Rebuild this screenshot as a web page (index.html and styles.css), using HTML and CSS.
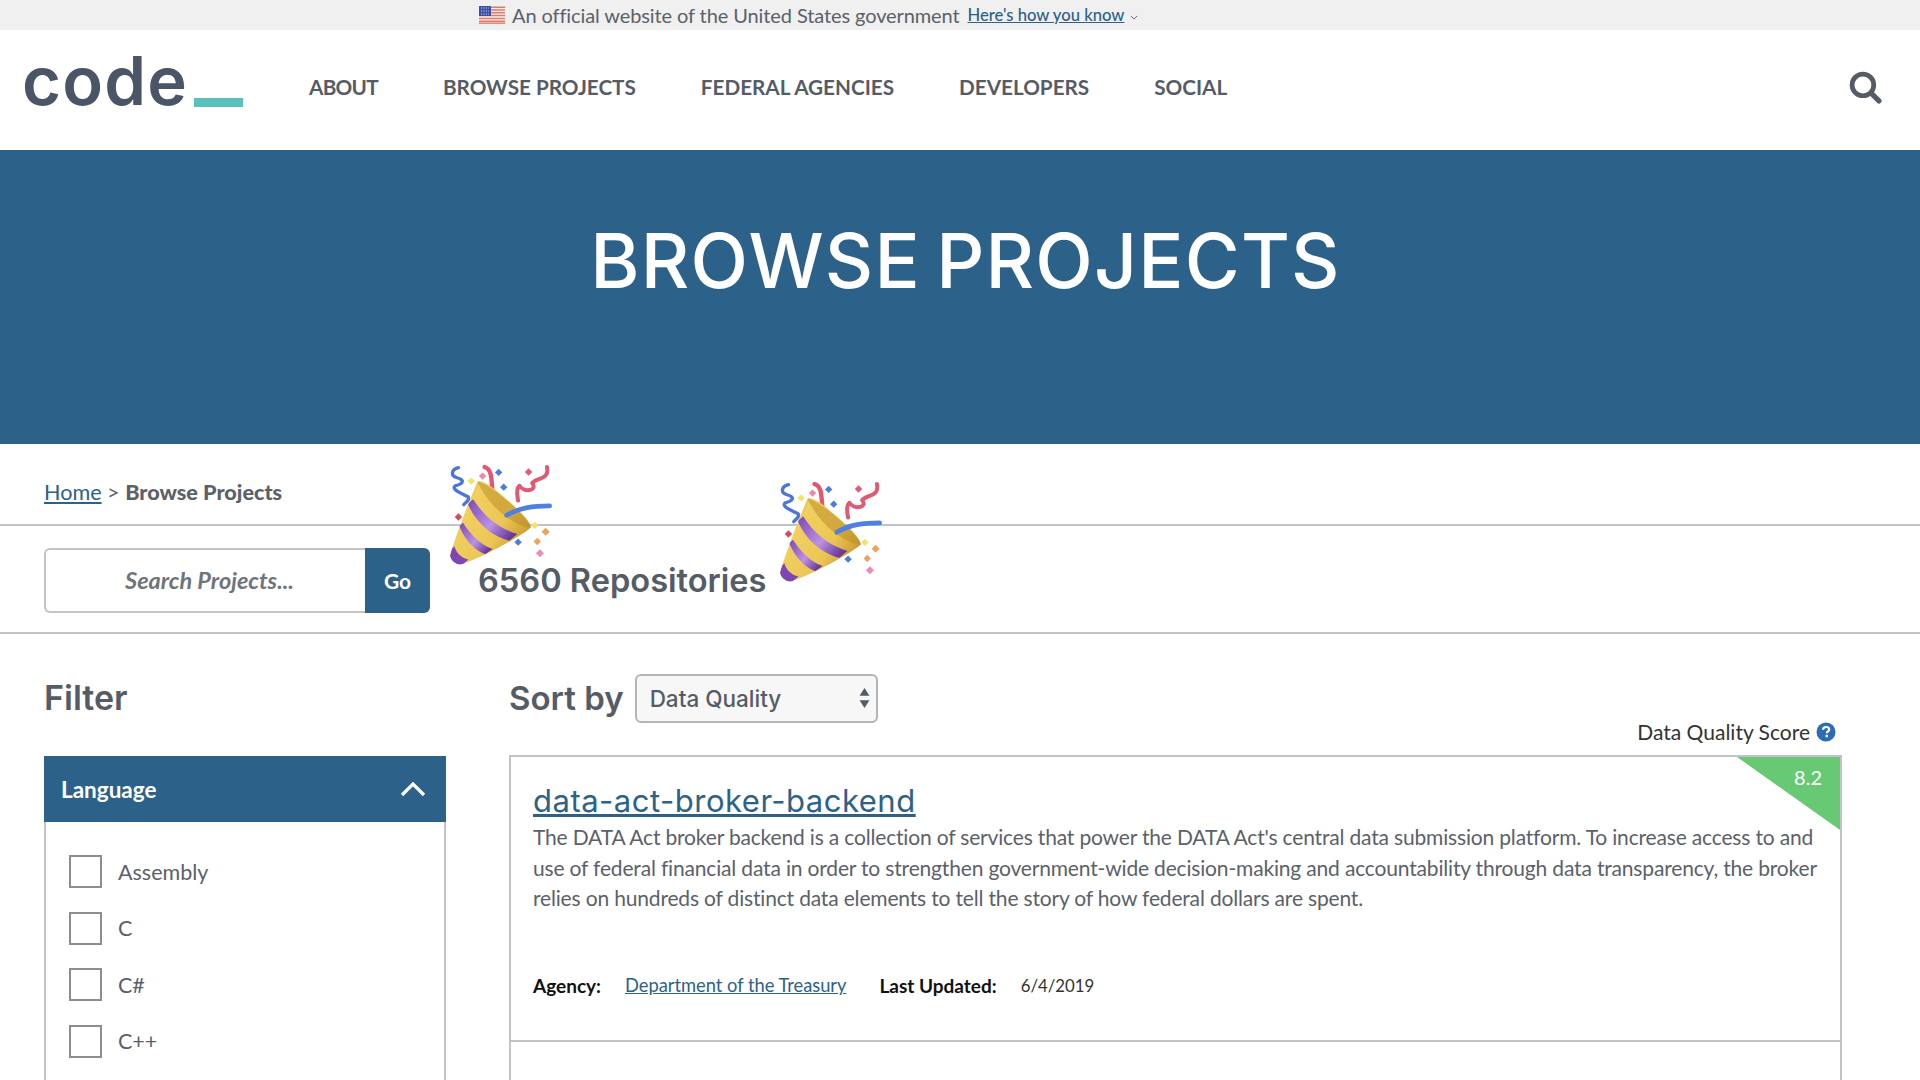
FILE: index.html
```html
<!DOCTYPE html>
<html lang="en">
<head>
<meta charset="utf-8">
<title>Browse Projects</title>
<link rel="stylesheet" href="styles.css">
</head>
<body>
<svg class="defs" width="0" height="0" aria-hidden="true">
  <defs>
    <linearGradient id="gold" x1="0" y1="0" x2="1" y2="0.6">
      <stop offset="0" stop-color="#c2962f"/>
      <stop offset="0.3" stop-color="#f0d060"/>
      <stop offset="0.7" stop-color="#ecc655"/>
      <stop offset="1" stop-color="#c8982f"/>
    </linearGradient>
    <linearGradient id="purple" x1="0" y1="0" x2="1" y2="0.7">
      <stop offset="0" stop-color="#7d45b5"/>
      <stop offset="0.6" stop-color="#bb92e6"/>
      <stop offset="1" stop-color="#6a3a9c"/>
    </linearGradient>
    <clipPath id="conecut">
      <path d="M113 95C128 92 150 104 190 140C235 178 272 215 272 232C240 260 130 320 66 342C50 345 34 332 31 316C50 250 90 150 113 95Z"/>
    </clipPath>
    <symbol id="popper" viewBox="25 40 310 310">
      <path d="M56 54C34 60 32 78 52 84C80 92 66 104 46 108C36 118 58 128 84 140C92 148 78 158 72 164" fill="none" stroke="#4a76dc" stroke-width="10" stroke-linecap="round" stroke-linejoin="round"/>
      <path d="M134 52C162 58 152 110 162 160" fill="none" stroke="#e5566e" stroke-width="13" stroke-linecap="round"/>
      <path d="M320 52C328 92 288 82 276 100C294 124 250 128 238 108C226 118 232 140 234 152" fill="none" stroke="#df5a72" stroke-width="12" stroke-linejoin="round" stroke-linecap="round"/>
      <path d="M113 95C128 92 150 104 190 140C235 178 272 215 272 232C240 260 130 320 66 342C50 345 34 332 31 316C50 250 90 150 113 95Z" fill="url(#gold)"/>
      <g clip-path="url(#conecut)">
        <path d="M84 162L100 148C130 195 170 232 232 252L208 272C155 258 108 218 84 162Z" fill="url(#purple)"/>
        <path d="M58 228L70 218C92 252 118 282 158 296L136 312C105 302 76 270 58 228Z" fill="url(#purple)"/>
        <path d="M36 296L44 288C50 308 64 322 86 328L66 345C50 345 30 332 31 316Z" fill="#7d45b5"/>
        <path d="M113 95C145 100 245 180 272 232C232 232 150 180 113 95Z" fill="#b98a26" opacity="0.5"/>
      </g>
      <path d="M200 196C240 172 280 168 328 168" fill="none" stroke="#4f80e0" stroke-width="14" stroke-linecap="round"/>
      <path d="M83 94l11-11 11 11-11 11z" fill="#f3e36b"/>
      <path d="M117 79l11-11 11 11-11 11z" fill="#e58aa8"/>
      <path d="M165 68l11-11 11 11-11 11z" fill="#4a7de0"/>
      <path d="M180 112l11-11 11 11-11 11z" fill="#4a7de0"/>
      <path d="M254 67l11-11 11 11-11 11z" fill="#e25a78"/>
      <path d="M45 201l11-11 11 11-11 11z" fill="#d9495e"/>
      <path d="M273 226l11-11 11 11-11 11z" fill="#f3e36b"/>
      <path d="M304 245l12-12 12 12-12 12z" fill="#eea25c"/>
      <path d="M280 274l11-11 11 11-11 11z" fill="#eea25c"/>
      <path d="M223 276l11-11 11 11-11 11z" fill="#4a7de0"/>
      <path d="M287 309l12-12 12 12-12 12z" fill="#ea8db4"/>
    </symbol>
  </defs>
</svg>

<div class="gov-banner">
  <svg class="flag" viewBox="0 0 26 18" aria-hidden="true">
    <rect width="26" height="18" fill="#f4f0ee"/>
    <path d="M0 1.2h26M0 4h26M0 6.8h26M0 9.6h26M0 12.4h26M0 15.2h26" stroke="#de7a6c" stroke-width="1.5"/>
    <path d="M0 17.2h26" stroke="#e08a7c" stroke-width="1.6"/>
    <rect width="12" height="10" fill="#3c4fa6"/>
    <path d="M2 2h8M2 5h8M2 8h8" stroke="#c6cdf0" stroke-width="1" stroke-dasharray="1.2 1.2"/>
  </svg>
  <span class="gov-text">An official website of the United States government</span>
  <a class="gov-link" href="#">Here's how you know</a>
  <svg class="gov-chevron" viewBox="0 0 10 6" aria-hidden="true"><path d="M1 1l4 4 4-4" fill="none" stroke="#5b616b" stroke-width="1.2"/></svg>
</div>

<header class="site-header">
  <a class="logo" href="#"><span class="logo-word">code</span><span class="logo-bar"></span></a>
  <nav class="main-nav">
    <a class="nav-about" href="#">ABOUT</a>
    <a href="#">BROWSE PROJECTS</a>
    <a href="#">FEDERAL AGENCIES</a>
    <a href="#">DEVELOPERS</a>
    <a href="#">SOCIAL</a>
  </nav>
  <svg class="search-icon" viewBox="0 0 32 32" aria-hidden="true">
    <circle cx="13.5" cy="13.5" r="10.5" fill="none" stroke="#555c66" stroke-width="4.6"/>
    <path d="M21.5 21.5L29 29" stroke="#555c66" stroke-width="5" stroke-linecap="round"/>
  </svg>
</header>

<section class="hero"><h1>BROWSE PROJECTS</h1></section>

<div class="breadcrumb"><a href="#">Home</a> <span class="crumb-sep">&gt;</span> <strong>Browse Projects</strong></div>

<div class="search-row">
  <div class="search-box">
    <div class="search-input">Search Projects...</div>
    <div class="search-go">Go</div>
  </div>
  <div class="repo-count">
    <svg class="popper popper-left" aria-hidden="true"><use href="#popper"/></svg>
    <h2>6560 Repositories</h2>
    <svg class="popper popper-right" aria-hidden="true"><use href="#popper"/></svg>
  </div>
</div>

<main class="content">
  <aside class="sidebar">
    <h3 class="filter-title">Filter</h3>
    <div class="panel">
      <div class="panel-head">
        <span>Language</span>
        <svg class="panel-chevron" viewBox="0 0 26 16" aria-hidden="true"><path d="M2 14L13 3l11 11" fill="none" stroke="#fff" stroke-width="3.2"/></svg>
      </div>
      <ul class="check-list">
        <li><span class="box"></span>Assembly</li>
        <li><span class="box"></span>C</li>
        <li><span class="box"></span>C#</li>
        <li><span class="box"></span>C++</li>
      </ul>
    </div>
  </aside>
  <section class="results">
    <div class="sort-row">
      <span class="sort-label">Sort by</span>
      <div class="sort-select">
        <span>Data Quality</span>
        <svg class="sort-arrows" viewBox="0 0 10 20" aria-hidden="true"><path d="M5 1l4.500 7h-9zM5 19l4.500-7h-9z" fill="#555c66"/></svg>
      </div>
    </div>
    <div class="dq-row">
      <span>Data Quality Score</span>
      <svg class="dq-help" viewBox="0 0 20 20" aria-hidden="true">
        <circle cx="10" cy="10" r="9.500" fill="#2b6cb5"/>
        <path d="M7 7.800C7 5.900 8.300 5 10.100 5 11.900 5 13.200 6 13.200 7.500 13.200 9.400 10.800 9.500 10.800 11.300" fill="none" stroke="#fff" stroke-width="2.200"/>
        <rect x="9.600" y="12.800" width="2.400" height="2.400" fill="#fff"/>
      </svg>
    </div>
    <article class="card">
      <div class="score"><span>8.2</span></div>
      <a class="card-title" href="#">data-act-broker-backend</a>
      <p class="card-desc">The DATA Act broker backend is a collection of services that power the DATA Act's central data submission platform. To increase access to and<br>use of federal financial data in order to strengthen government-wide decision-making and accountability through data transparency, the broker<br>relies on hundreds of distinct data elements to tell the story of how federal dollars are spent.</p>
      <div class="card-meta">
        <strong class="meta-agency">Agency:</strong>
        <a href="#">Department of the Treasury</a>
        <strong class="meta-updated">Last Updated:</strong>
        <span class="meta-date">6/4/2019</span>
      </div>
    </article>
    <div class="card-next"></div>
  </section>
</main>
</body>
</html>
```

FILE: styles.css
```css
* { box-sizing: border-box; }
html, body { margin: 0; padding: 0; height: 1080px; overflow: hidden; background: #fff; }
body { font-family: "Lato", "Liberation Sans", sans-serif; color: #5b616b; }
a { color: #2c6189; }
h1, h2, h3, p, ul { margin: 0; padding: 0; }
.defs { position: absolute; }

.gov-banner { height: 30px; background: #f0f0f0; display: flex; align-items: center; padding-left: 479px; font-size: 20px; }
.flag { width: 26px; height: 18px; margin-right: 7px; }
.gov-text { color: #5b616b; letter-spacing: -0.100px; }
.gov-link { font-size: 16.600px; margin-left: 8px; color: #2c6189; font-weight: 500; }
.gov-chevron { width: 8px; height: 5px; margin-left: 6px; margin-top: 4px; }

.site-header { height: 120px; display: flex; align-items: center; padding-left: 22px; position: relative; }
.logo { display: flex; align-items: flex-end; text-decoration: none; width: 287px; height: 70px; margin-top: -18px; }
.logo-word { font-family: "Inter", sans-serif; font-weight: 600; font-size: 67px; line-height: 70px; letter-spacing: 1.200px; color: #4a5567; }
.logo-bar { width: 49px; height: 9px; background: #5bbfbb; margin-left: 6px; margin-bottom: 9px; }
.main-nav { display: flex; gap: 65px; margin-top: -6px; }
.main-nav a { font-size: 20.700px; font-weight: 700; color: #555c66; text-decoration: none; }
.main-nav .nav-about { letter-spacing: -0.700px; }
.search-icon { width: 33px; height: 33px; margin-left: auto; margin-right: 38px; margin-top: -6px; }

.hero { height: 294px; background: #2c6189; display: flex; justify-content: center; padding: 69px 0 0 11px; }
.hero h1 { font-family: "Inter", sans-serif; font-weight: 500; font-size: 75px; line-height: 84px; color: #fff; letter-spacing: 1.200px; word-spacing: -6px; }

.breadcrumb { height: 82px; border-bottom: 2px solid #c2c2c8; padding: 33px 0 0 44px; font-size: 21.600px; line-height: 30px; color: #5b616b; }
.breadcrumb strong { font-weight: 900; }

.search-row { height: 108px; border-bottom: 2px solid #c2c2c8; display: flex; align-items: center; padding: 2px 0 0 44px; }
.search-box { display: flex; width: 386px; height: 65px; }
.search-input { flex: 1; border: 2px solid #c4c4c4; border-right: 0; border-radius: 6px 0 0 6px; display: flex; align-items: center; justify-content: center; padding-left: 8px; font-size: 23.500px; font-weight: 700; font-style: italic; color: #6f747c; }
.search-go { width: 65px; background: #2c6189; color: #fff; border-radius: 0 6px 6px 0; display: flex; align-items: center; justify-content: center; font-size: 21px; font-weight: 700; }
.repo-count { position: relative; margin-left: 48px; }
.repo-count h2 { font-family: "Inter", sans-serif; font-size: 32.600px; font-weight: 600; line-height: 40px; color: #555c66; }
.popper { position: absolute; width: 104px; height: 104px; }
.popper-left { left: -30px; top: -97px; }
.popper-right { left: 300px; top: -80px; }

.content { display: flex; height: 447px; padding: 40px 0 0 44px; gap: 63px; overflow: hidden; }
.sidebar { width: 402px; flex: none; }
.filter-title { font-family: "Inter", sans-serif; font-size: 34px; font-weight: 600; line-height: 48px; color: #555c66; margin-bottom: 34px; }
.panel { border: 2px solid #c2c2c8; border-top: 0; height: 400px; }
.panel-head { height: 66px; margin: 0 -2px; background: #2c6189; display: flex; align-items: center; justify-content: space-between; padding: 0 20px 0 17px; color: #fff; font-size: 22.500px; font-weight: 700; }
.panel-chevron { width: 26px; height: 16px; }
.check-list { list-style: none; padding: 33px 0 0 23px; }
.check-list li { display: flex; align-items: center; height: 33px; margin-bottom: 23.500px; font-size: 21.500px; color: #5b616b; }
.box { width: 33px; height: 33px; border: 2px solid #8d8d8d; margin-right: 16px; }

.results { width: 1333px; }
.sort-row { display: flex; align-items: center; height: 48px; }
.sort-label { font-family: "Inter", sans-serif; font-size: 33px; font-weight: 600; color: #555c66; margin-right: 11px; }
.sort-select { width: 243px; height: 49px; border: 2px solid #b5b5b5; border-radius: 6px; background: #f7f7f7; display: flex; align-items: center; justify-content: space-between; padding: 0 6px 0 13px; font-family: "Inter", sans-serif; font-weight: 500; font-size: 22.500px; color: #555c66; }
.sort-arrows { width: 11px; height: 22px; }
.dq-row { display: flex; justify-content: flex-end; align-items: center; height: 33px; padding: 0 6px 14px 0; font-size: 21px; color: #333; gap: 6px; }
.dq-help { width: 20px; height: 20px; }
.card { position: relative; border: 2px solid #c2c2c8; height: 287px; padding: 22px 10px 0 22px; overflow: hidden; }
.card-next { height: 60px; border: 2px solid #c2c2c8; border-top: 0; border-bottom: 0; }
.score { position: absolute; right: 0; top: 0; width: 103px; height: 73px; background: #68c974; clip-path: polygon(0 0, 100% 0, 100% 100%); color: #fff; font-size: 20px; }
.score span { position: absolute; right: 18px; top: 8px; }
.card-title { font-family: "Inter", sans-serif; font-size: 31px; line-height: 44px; letter-spacing: 0.500px; display: block; color: #2c6189; }
.card-desc { font-size: 21px; line-height: 30.600px; letter-spacing: -0.170px; color: #5b616b; margin-top: -1px; }
.card-meta { display: flex; align-items: center; font-size: 18.300px; color: #333; margin-top: 60px; }
.meta-agency { color: #111; width: 92px; font-size: 19px; }
.meta-updated { color: #111; font-size: 19px; margin: 0 24px 0 33px; }
.meta-date { font-size: 16.800px; }
.card-meta a { color: #2c6189; }
```
